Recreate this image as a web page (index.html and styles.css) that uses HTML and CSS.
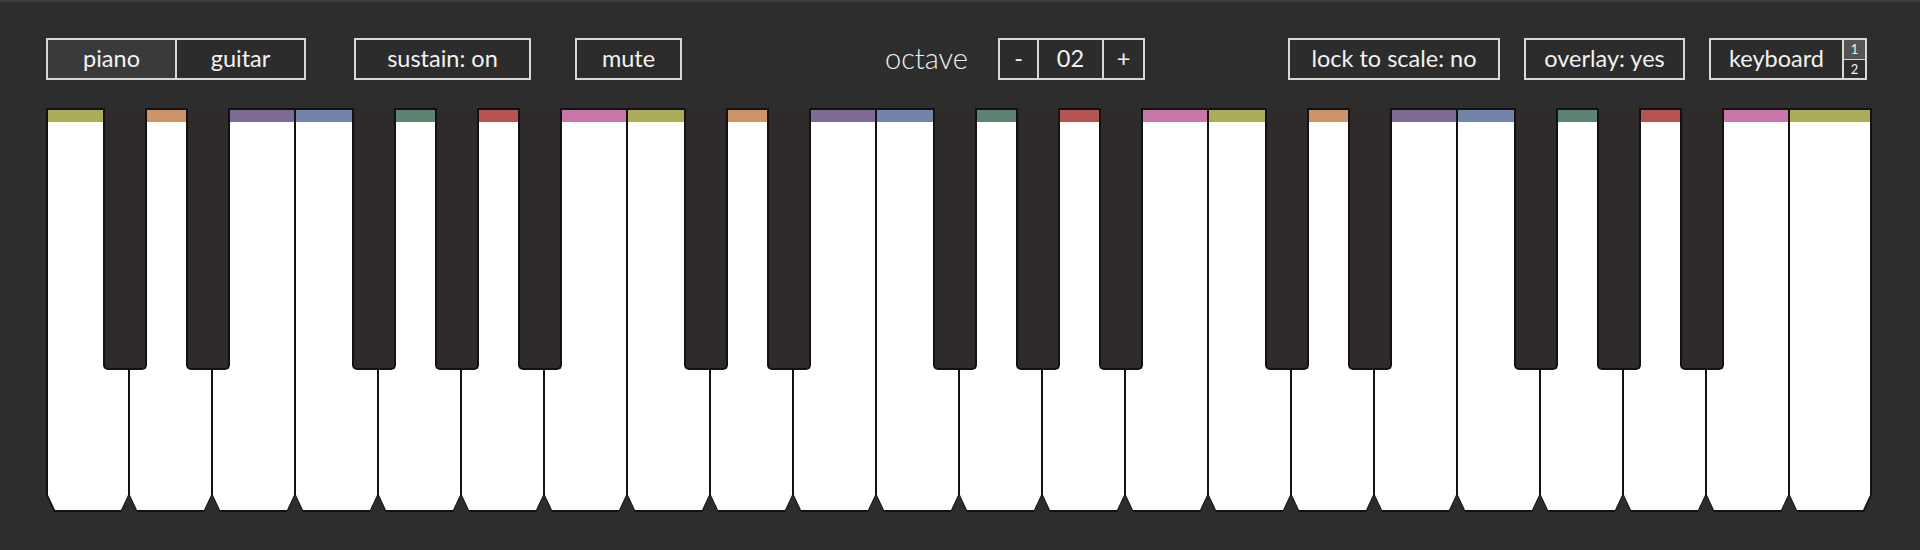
FILE: index.html
```html
<!DOCTYPE html>
<html lang="en">
<head>
    <meta charset="UTF-8">
    <meta name="viewport" content="width=device-width, initial-scale=1.0">
    <title>Keyboard</title>
    <link rel="stylesheet" href="styles.css">
</head>
<body>
    <div class="toolbar">
        <div class="group">
            <button class="btn selected w-130">piano</button>
            <button class="btn w-130 joined">guitar</button>
        </div>
        <button class="btn sustain">sustain: on</button>
        <button class="btn mute">mute</button>

        <div class="octave">
            <span class="octave-label">octave</span>
            <div class="group">
                <button class="btn oct-minus">-</button>
                <span class="btn oct-value joined">02</span>
                <button class="btn oct-plus joined">+</button>
            </div>
        </div>

        <div class="right">
            <button class="btn lock">lock to scale: no</button>
            <button class="btn overlay">overlay: yes</button>
            <div class="group">
                <button class="btn kbd">keyboard</button>
                <div class="kbd-stack">
                    <span class="stack-item active">1</span>
                    <span class="stack-item">2</span>
                </div>
            </div>
        </div>
    </div>

    <div class="keyboard">
        <div class="white-key c"><div class="black-key"></div></div>
        <div class="white-key d"><div class="black-key"></div></div>
        <div class="white-key e"></div>
        <div class="white-key f"><div class="black-key"></div></div>
        <div class="white-key g"><div class="black-key"></div></div>
        <div class="white-key a"><div class="black-key"></div></div>
        <div class="white-key b"></div>

        <div class="white-key c"><div class="black-key"></div></div>
        <div class="white-key d"><div class="black-key"></div></div>
        <div class="white-key e"></div>
        <div class="white-key f"><div class="black-key"></div></div>
        <div class="white-key g"><div class="black-key"></div></div>
        <div class="white-key a"><div class="black-key"></div></div>
        <div class="white-key b"></div>

        <div class="white-key c"><div class="black-key"></div></div>
        <div class="white-key d"><div class="black-key"></div></div>
        <div class="white-key e"></div>
        <div class="white-key f"><div class="black-key"></div></div>
        <div class="white-key g"><div class="black-key"></div></div>
        <div class="white-key a"><div class="black-key"></div></div>
        <div class="white-key b"></div>

        <div class="white-key c last"></div>
    </div>
</body>
</html>
```

FILE: styles.css
```css
* {
    margin: 0;
    padding: 0;
    box-sizing: border-box;
}

body {
    background-color: rgb(45, 45, 45);
    border-top: 2px solid rgb(60, 60, 60);
    font-family: Lato, "Noto Sans", sans-serif;
    color: rgb(240, 240, 240);
    height: 550px;
    overflow: hidden;
}

/* toolbar */

.toolbar {
    display: flex;
    align-items: center;
    height: 42px;
    margin-top: 36px;
    padding-left: 46px;
    padding-right: 53px;
}

.group {
    display: flex;
}

.btn {
    display: flex;
    align-items: center;
    justify-content: center;
    height: 42px;
    border: 2px solid rgb(215, 215, 215);
    background-color: rgb(44, 44, 44);
    color: rgb(242, 242, 242);
    font-family: inherit;
    font-size: 23.5px;
    padding-bottom: 3px;
}

.btn.joined {
    border-left-width: 1px;
}
.group .btn:first-child {
    border-right-width: 1px;
}
.group .btn.joined:not(:last-child) {
    border-right-width: 1px;
}

.selected {
    background-color: rgb(58, 58, 58);
}

.w-130 { width: 130px; }

.sustain {
    width: 177px;
    margin-left: 48px;
}
.mute {
    width: 107px;
    margin-left: 44px;
}

.octave {
    display: flex;
    align-items: center;
    margin-left: 203px;
}
.octave-label {
    font-size: 29px;
    font-weight: 300;
    width: 86px;
    margin-right: 27px;
    padding-bottom: 3px;
    white-space: nowrap;
}
.oct-minus { width: 40px; }
.oct-value { width: 65px; }
.oct-plus { width: 42px; }

.right {
    display: flex;
    align-items: center;
    margin-left: auto;
    gap: 24px;
}
.lock { width: 212px; }
.overlay { width: 161px; }
.kbd {
    width: 134px;
}

.kbd-stack {
    display: flex;
    flex-direction: column;
    width: 24px;
    height: 42px;
    border: 2px solid rgb(215, 215, 215);
    border-left-width: 1px;
}
.stack-item {
    flex: 1;
    display: flex;
    align-items: center;
    justify-content: center;
    font-size: 13px;
    background-color: rgb(44, 44, 44);
}
.stack-item.active {
    background-color: rgb(85, 85, 85);
    border-bottom: 1px solid rgb(215, 215, 215);
}

/* keyboard */

.keyboard {
    display: flex;
    position: relative;
    width: 1826px;
    height: 404px;
    margin-top: 28px;
    margin-left: 46px;
}

.white-key {
    flex: 1;
    position: relative;
    --strip: rgb(171, 171, 88);
}

.white-key::before {
    content: "";
    position: absolute;
    top: 0;
    bottom: 0;
    left: 0;
    right: 0;
    background-color: rgb(18, 18, 18);
    clip-path: polygon(0 0, 100% 0, 100% calc(100% - 17px), calc(100% - 8px) 100%, 8px 100%, 0 calc(100% - 17px));
}

.white-key::after {
    content: "";
    position: absolute;
    top: 2px;
    bottom: 2px;
    left: 1px;
    right: 1px;
    background: linear-gradient(var(--strip) 0, var(--strip) 12px, #fff 12px);
    clip-path: polygon(0 0, 100% 0, 100% calc(100% - 15px), calc(100% - 7px) 100%, 7px 100%, 0 calc(100% - 15px));
}

.white-key:first-child::after { left: 2px; }
.white-key.last::after { right: 2px; }

.c { --strip: rgb(171, 171, 88); }
.d { --strip: rgb(204, 148, 104); }
.e { --strip: rgb(128, 107, 151); }
.f { --strip: rgb(114, 132, 170); }
.g { --strip: rgb(94, 131, 115); }
.a { --strip: rgb(181, 84, 81); }
.b { --strip: rgb(201, 118, 169); }

.black-key {
    position: absolute;
    top: 0;
    right: -18px;
    width: 44px;
    height: 262px;
    z-index: 2;
    background-color: rgb(47, 43, 42);
    border: 2px solid rgb(18, 18, 18);
    border-top: none;
    border-radius: 0 0 5px 5px;
}
```
